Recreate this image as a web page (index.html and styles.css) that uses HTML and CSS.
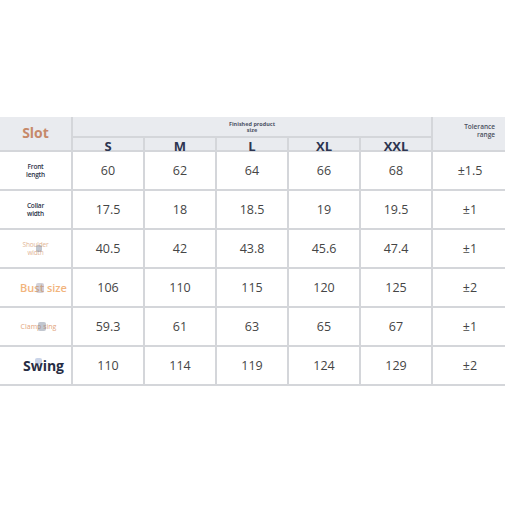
FILE: index.html
```html
<!DOCTYPE html>
<html>
<head>
<meta charset="utf-8">
<link rel="stylesheet" href="styles.css">
</head>
<body>
<div class="sheet">
  <div class="grid">
    <div class="hd slot">Slot</div>
    <div class="hd finished">Finished product<br>size</div>
    <div class="hd tol">Tolerance<br>range</div>
    <div class="hd size">S</div>
    <div class="hd size">M</div>
    <div class="hd size">L</div>
    <div class="hd size">XL</div>
    <div class="hd size">XXL</div>

    <div class="lbl tiny dark">Front<br>length</div>
    <div class="num">60</div><div class="num">62</div><div class="num">64</div><div class="num">66</div><div class="num">68</div><div class="num tolv">±1.5</div>

    <div class="lbl tiny dark">Collar<br>width</div>
    <div class="num">17.5</div><div class="num">18</div><div class="num">18.5</div><div class="num">19</div><div class="num">19.5</div><div class="num tolv">±1</div>

    <div class="lbl tiny faded"><span class="wrap">Shoulder<br>width<span class="smudge s1"></span></span></div>
    <div class="num">40.5</div><div class="num">42</div><div class="num">43.8</div><div class="num">45.6</div><div class="num">47.4</div><div class="num tolv">±1</div>

    <div class="lbl bust"><span class="wrap">Bust size<span class="smudge s2"></span></span></div>
    <div class="num">106</div><div class="num">110</div><div class="num">115</div><div class="num">120</div><div class="num">125</div><div class="num tolv">±2</div>

    <div class="lbl clamp"><span class="wrap">Clamp sing<span class="smudge s3"></span></span></div>
    <div class="num">59.3</div><div class="num">61</div><div class="num">63</div><div class="num">65</div><div class="num">67</div><div class="num tolv">±1</div>

    <div class="lbl swing"><span class="wrap">Swing<span class="smudge s4"></span></span></div>
    <div class="num">110</div><div class="num">114</div><div class="num">119</div><div class="num">124</div><div class="num">129</div><div class="num tolv">±2</div>
  </div>
</div>
</body>
</html>
```

FILE: styles.css
```css
html, body {
  margin: 0;
  padding: 0;
  background: #ffffff;
}
body {
  font-family: "Open Sans", "Noto Sans", sans-serif;
}
.sheet {
  padding-top: 117px;
  width: 505px;
}
.grid {
  display: grid;
  grid-template-columns: 71px repeat(5, 70px) 1fr;
  grid-template-rows: 19px 12px repeat(6, 37px);
  gap: 2px;
  background: #d4d6da;
  padding-bottom: 2px;
}
.grid > div {
  background: #ffffff;
  display: flex;
  align-items: center;
  justify-content: center;
  text-align: center;
}
.grid > .hd {
  background: #e9ebef;
}
.slot {
  grid-row: 1 / 3;
  grid-column: 1;
  color: #c6896a;
  font-weight: 700;
  font-size: 14px;
  padding-bottom: 2px;
}
.finished {
  grid-row: 1;
  grid-column: 2 / 7;
  font-size: 5.5px;
  line-height: 6.5px;
  color: #4e5466;
  font-weight: 700;
  padding-top: 1px;
}
.grid > .tol {
  grid-row: 1 / 3;
  grid-column: 7;
  font-size: 6.5px;
  line-height: 8px;
  color: #4a5060;
  font-weight: 600;
  align-items: flex-start;
  justify-content: flex-end;
  text-align: right;
  padding: 6px 10px 0 0;
}
.size {
  font-size: 13px;
  font-weight: 700;
  color: #2c3450;
  line-height: 12px;
  padding-top: 3px;
  box-sizing: border-box;
}
.num {
  font-size: 12.5px;
  color: #454545;
}
.tolv {
  padding-left: 2px;
}
.lbl {
  font-weight: 600;
}
.wrap {
  position: relative;
  display: inline-block;
}
.tiny {
  font-size: 6.5px;
  line-height: 8px;
  letter-spacing: -0.2px;
}
.dark {
  color: #2c3248;
}
.faded {
  color: #e2b596;
  font-weight: 400;
}
.bust {
  color: #f2b47c;
  font-size: 11px;
  padding-left: 16px;
}
.clamp {
  color: #e2a47c;
  font-size: 7px;
  font-weight: 500;
  padding-left: 6px;
}
.swing {
  color: #272d44;
  font-size: 14px;
  font-weight: 700;
  padding-left: 16px;
}
.smudge {
  position: absolute;
  background: rgba(120, 130, 150, 0.45);
  border-radius: 2px;
  filter: blur(0.6px);
}
.s1 { left: 13px; top: 4px; width: 6px; height: 7px; }
.s2 { left: 16px; top: 3px; width: 8px; height: 10px; background: rgba(140, 140, 160, 0.4); }
.s3 { left: 17px; top: 0px; width: 8px; height: 9px; }
.s4 { left: 12px; top: 2px; width: 7px; height: 6px; background: rgba(150, 170, 210, 0.5); }
```
